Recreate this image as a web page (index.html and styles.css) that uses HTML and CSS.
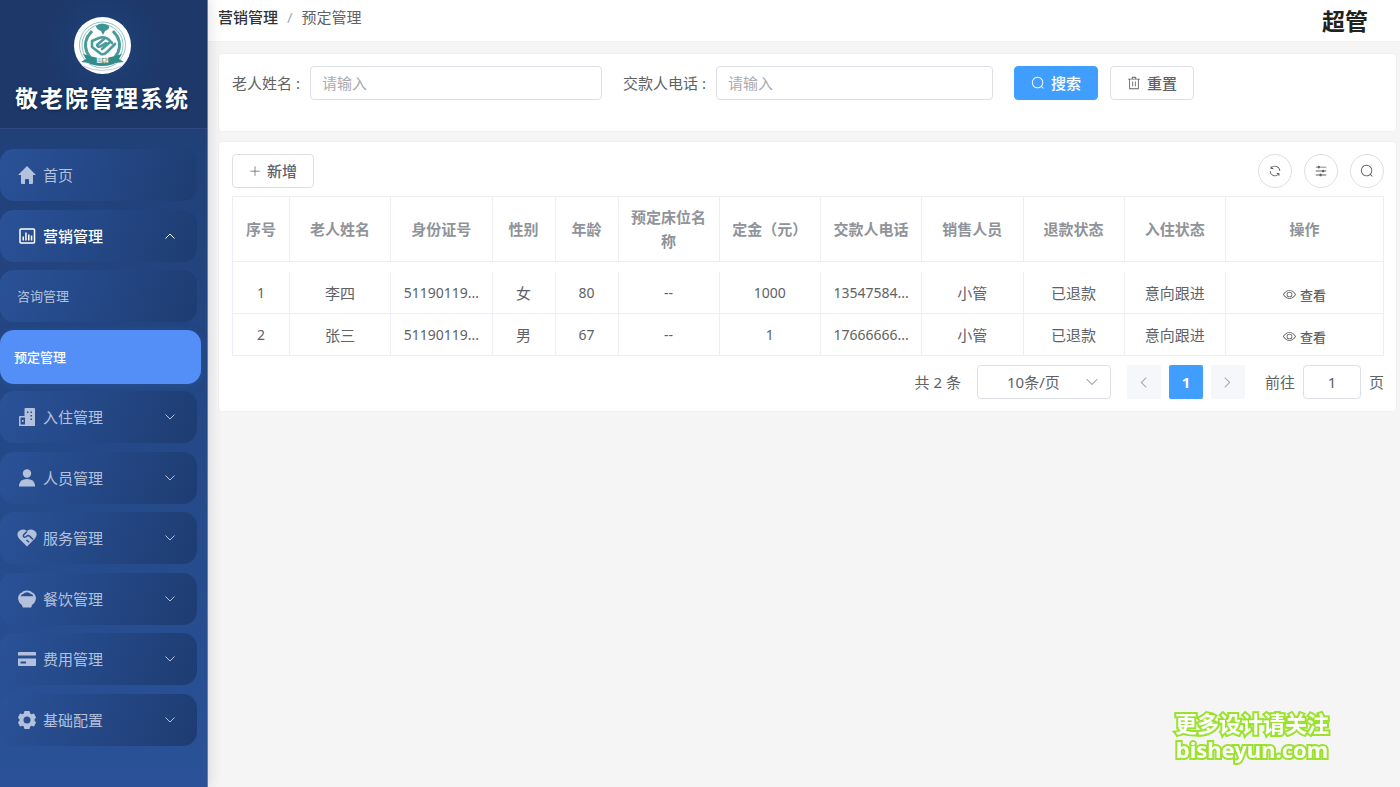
FILE: index.html
```html
<!DOCTYPE html>
<html lang="zh-CN">
<head>
<meta charset="utf-8">
<meta name="viewport" content="width=device-width, initial-scale=1">
<title>敬老院管理系统</title>
<link rel="stylesheet" href="styles.css">
</head>
<body>
<svg class="sprite" aria-hidden="true">
  <symbol id="search" viewBox="0 0 1024 1024"><path d="M795.904 750.72l124.992 124.928a32 32 0 0 1-45.248 45.248L750.656 795.904a416 416 0 1 1 45.248-45.248zM480 832a352 352 0 1 0 0-704 352 352 0 0 0 0 704z"/></symbol>
  <symbol id="view" viewBox="0 0 1024 1024"><path d="M512 160c320 0 512 352 512 352S832 864 512 864 0 512 0 512s192-352 512-352zm0 64c-225.28 0-384.128 208.064-436.8 288 52.608 79.872 211.456 288 436.8 288 225.28 0 384.128-208.064 436.8-288-52.608-79.872-211.456-288-436.8-288zm0 64a224 224 0 1 1 0 448 224 224 0 0 1 0-448zm0 64a160.192 160.192 0 0 0-160 160c0 88.192 71.744 160 160 160s160-71.808 160-160-71.744-160-160-160z"/></symbol>
  <symbol id="chevron" viewBox="0 0 12 12"><path d="M1.500 3.500 6 8l4.500-4.500" fill="none" stroke="currentColor" stroke-width="1"/></symbol>
</svg>
<div class="layout">
  <aside class="sidebar">
    <div class="brand">
      <svg class="logo" viewBox="0 0 57 57" aria-hidden="true">
        <circle cx="28.500" cy="28.500" r="28.500" fill="#fff"/>
        <g fill="none" stroke="#4a9c9c">
          <circle cx="28.500" cy="28" r="23" stroke-width="1" opacity=".6"/>
          <circle cx="28.500" cy="28" r="20.500" stroke-width="1" opacity=".6"/>
          <path d="M16 40a18 18 0 0 1-2-21l4-5M41 40a18 18 0 0 0 2-21l-4-5" stroke-width="3"/>
          <path d="M9 49q19 9 39 0" stroke="#c3cce0" stroke-width="1"/>
        </g>
        <path d="M22 9q6-5 13 0 1 3-4 5l-2 4-2-4q-5-2-5-5z" fill="#3d9494"/>
        <g fill="none" stroke="#4a9c9c" stroke-width="2.600" stroke-linecap="round" stroke-linejoin="round">
          <path d="M18 24l7-3q5-2 9 1l4 4M18 24v6l9 7q3 1 6-2l8-8"/>
          <path d="M30 22l-7 6q1 3 4 1l5-3M35 26l-7 6"/>
        </g>
        <path d="M7 45l5-3-3-5 7 2q12 4 25 0l7-2-3 5 5 3-9 1-1 1q-12 4-24 0l-1-1z" fill="#338c8a"/>
        <text class="logo-text" x="28.500" y="45" text-anchor="middle">颐和</text>
      </svg>
      <h1 class="brand-name">敬老院管理系统</h1>
    </div>
    <nav class="menu">
      <a class="item" href="#">
        <svg class="item-icon" viewBox="0 0 18 18"><path d="M9 0 0 9h3v8q0 1 1 1h3v-4q0-1 1-1h2q1 0 1 1v4h3q1 0 1-1V9h3z"/></svg>
        <span>首页</span></a>
      <a class="item item-open" href="#">
        <svg class="item-icon" viewBox="0 0 18 18"><rect x="2" y="2" width="14.500" height="14" rx="1" fill="none" stroke="currentColor" stroke-width="1.500"/><path d="M4.500 9.500H6v4H4.500zM7.200 5.500h1.500v8H7.200zM10 7.500h1.500v6H10zM12.800 8.500h1.500v5h-1.500z"/></svg>
        <span>营销管理</span><svg class="arrow arrow-up"><use href="#chevron"/></svg></a>
      <a class="item item-sub" href="#"><span>咨询管理</span></a>
      <a class="item item-sub item-active" href="#" aria-current="page"><span>预定管理</span></a>
      <a class="item" href="#">
        <svg class="item-icon" viewBox="0 0 18 18"><path fill-rule="evenodd" d="M6.500 7V1q0-1 1-1H16q1 0 1 1v17H1V9q0-1 1-1h4.500zM2.500 9.500v7h4.500v-7zM4 12h1.500v2H4zM9 3.500V5h1.500V3.500zm3.500 0V5H14V3.500zm0 3.500v1.500H14V7zm0 3.500V12H14v-1.500z"/></svg>
        <span>入住管理</span><svg class="arrow"><use href="#chevron"/></svg></a>
      <a class="item" href="#">
        <svg class="item-icon" viewBox="0 0 18 18"><circle cx="9" cy="4.500" r="4.200"/><path d="M1 17.500V16q1-6 8-6t8 6v1.500z"/></svg>
        <span>人员管理</span><svg class="arrow"><use href="#chevron"/></svg></a>
      <a class="item" href="#">
        <svg class="item-icon" viewBox="0 0 18 18"><path d="M9 17.500 1 9.500Q-2 5.500.5 2.500 4.500-1 9 2q4.500-3 8.500.5 2.500 3-.5 7z"/><path d="M9 2.500 5.700 5.800q-1 2.200 1 2.500 1.300 0 2.500-1.500 1.200-.8 2.300.3l3.500 3.400M8.500 11l2.500 2.300" fill="none" stroke="#274f94" stroke-width="1.500"/></svg>
        <span>服务管理</span><svg class="arrow"><use href="#chevron"/></svg></a>
      <a class="item" href="#">
        <svg class="item-icon" viewBox="0 0 18 18"><path fill-rule="evenodd" d="M0 8Q1 3 4 2.500 5 .5 9 .5t5 2Q17 3 18 8q-.5 5-4 7l-.8 2.500H4.800L4 15Q.5 13 0 8zM2.500 6.200h13q-1-2.500-3-2.500-1-1.500-3.500-1.500T5.500 3.700q-2 0-3 2.500z"/></svg>
        <span>餐饮管理</span><svg class="arrow"><use href="#chevron"/></svg></a>
      <a class="item" href="#">
        <svg class="item-icon" viewBox="0 0 18 18"><path fill-rule="evenodd" d="M1 2h16q1 0 1 1v2.500H0V3q0-1 1-1zM0 8.500h18V15q0 1-1 1H1q-1 0-1-1zM2.500 11.500v2h5.500v-2z"/></svg>
        <span>费用管理</span><svg class="arrow"><use href="#chevron"/></svg></a>
      <a class="item" href="#">
        <svg class="item-icon" viewBox="0 0 18 18"><path fill-rule="evenodd" d="M6.500 0h5l.7 2.600 1.300.7L16 2.600l2 4L16.200 9l1.800 2.400-2 4-2.500-.7-1.300.7-.7 2.600h-5l-.7-2.600-1.300-.7-2.500.7-2-4L1.800 9 0 6.600l2-4 2.500.7 1.300-.7zM9 5.500a3.500 3.500 0 1 0 0 7 3.500 3.500 0 0 0 0-7z"/></svg>
        <span>基础配置</span><svg class="arrow"><use href="#chevron"/></svg></a>
    </nav>
  </aside>

  <div class="page">
    <header class="topbar">
      <nav class="crumbs"><a class="crumb-link" href="#">营销管理</a><span class="crumb-sep">/</span><span>预定管理</span></nav>
      <strong class="user">超管</strong>
    </header>
    <main class="content">
      <form class="card filters">
        <div class="field"><label for="name">老人姓名 :</label><input class="input" id="name" type="text" placeholder="请输入"></div>
        <div class="field"><label for="phone">交款人电话 :</label><input class="input" id="phone" type="text" placeholder="请输入"></div>
        <div class="actions">
          <button class="btn btn-primary" type="button"><svg class="icon"><use href="#search"/></svg>搜索</button>
          <button class="btn" type="button"><svg class="icon" viewBox="0 0 1024 1024"><path d="M160 256H96a32 32 0 0 1 0-64h256V95.936a32 32 0 0 1 32-32h256a32 32 0 0 1 32 32V192h256a32 32 0 1 1 0 64h-64v672a32 32 0 0 1-32 32H192a32 32 0 0 1-32-32V256zm448-64v-64H416v64h192zM224 896h576V256H224v640zm192-128a32 32 0 0 1-32-32V416a32 32 0 0 1 64 0v320a32 32 0 0 1-32 32zm192 0a32 32 0 0 1-32-32V416a32 32 0 0 1 64 0v320a32 32 0 0 1-32 32z"/></svg>重置</button>
        </div>
      </form>

      <section class="card">
        <div class="toolbar">
          <button class="btn" type="button"><svg class="icon icon-plus" viewBox="0 0 1024 1024"><path d="M480 480V128a32 32 0 0 1 64 0v352h352a32 32 0 1 1 0 64H544v352a32 32 0 1 1-64 0V544H128a32 32 0 0 1 0-64h352z"/></svg>新增</button>
          <div class="tools">
            <button class="round" type="button" aria-label="刷新"><svg class="icon" viewBox="0 0 1024 1024"><path d="M771.776 794.88A384 384 0 0 1 128 512h64a320 320 0 0 0 555.712 216.448H654.72a32 32 0 1 1 0-64h149.056a32 32 0 0 1 32 32v148.928a32 32 0 1 1-64 0v-50.56zM276.288 295.616h92.992a32 32 0 0 1 0 64H220.16a32 32 0 0 1-32-32V178.56a32 32 0 0 1 64 0v50.56A384 384 0 0 1 896.128 512h-64a320 320 0 0 0-555.776-216.384z"/></svg></button>
            <button class="round" type="button" aria-label="列设置"><svg class="icon" viewBox="0 0 1024 1024"><path d="M389.44 768a96.064 96.064 0 0 1 181.12 0H896v64H570.56a96.064 96.064 0 0 1-181.12 0H128v-64h261.44zm192-288a96.064 96.064 0 0 1 181.12 0H896v64H762.56a96.064 96.064 0 0 1-181.12 0H128v-64h453.44zm-320-288a96.064 96.064 0 0 1 181.12 0H896v64H442.56a96.064 96.064 0 0 1-181.12 0H128v-64h133.44z"/></svg></button>
            <button class="round" type="button" aria-label="搜索"><svg class="icon"><use href="#search"/></svg></button>
          </div>
        </div>

        <table class="table">
          <colgroup><col class="col-index"><col><col><col class="col-short"><col class="col-short"><col><col><col><col><col><col><col class="col-ops"></colgroup>
          <thead><tr><th>序号</th><th>老人姓名</th><th>身份证号</th><th>性别</th><th>年龄</th><th>预定床位名称</th><th>定金（元）</th><th>交款人电话</th><th>销售人员</th><th>退款状态</th><th>入住状态</th><th>操作</th></tr></thead>
          <tbody>
            <tr><td class="num">1</td><td>李四</td><td class="num">51190119...</td><td>女</td><td class="num">80</td><td class="num">--</td><td class="num">1000</td><td class="num">13547584...</td><td>小管</td><td>已退款</td><td>意向跟进</td><td><button class="link" type="button"><svg class="icon-small"><use href="#view"/></svg>查看</button></td></tr>
            <tr><td class="num">2</td><td>张三</td><td class="num">51190119...</td><td>男</td><td class="num">67</td><td class="num">--</td><td class="num">1</td><td class="num">17666666...</td><td>小管</td><td>已退款</td><td>意向跟进</td><td><button class="link" type="button"><svg class="icon-small"><use href="#view"/></svg>查看</button></td></tr>
          </tbody>
        </table>

        <div class="pager">
          <span>共 2 条</span>
          <span class="size"><select class="size-select" aria-label="每页条数"><option>10条/页</option></select><svg class="size-arrow"><use href="#chevron"/></svg></span>
          <div class="pages">
            <button class="page-btn" type="button" aria-label="上一页" disabled><svg class="page-arrow arrow-left"><use href="#chevron"/></svg></button>
            <button class="page-btn page-current" type="button">1</button>
            <button class="page-btn" type="button" aria-label="下一页" disabled><svg class="page-arrow arrow-right"><use href="#chevron"/></svg></button>
          </div>
          <label class="jump">前往<input class="input jump-input" type="text" value="1">页</label>
        </div>
      </section>
    </main>
  </div>
</div>
<div class="watermark"><span>更多设计请关注</span><span>bisheyun.com</span></div>
</body>
</html>
```

FILE: styles.css
```css
* { box-sizing: border-box; }

body {
  margin: 0;
  font: 15px/22px "Noto Sans", "Noto Sans CJK SC", sans-serif;
  color: #606266;
  background: #f5f5f5;
}

a { color: inherit; text-decoration: none; }
button, input, select { font: inherit; color: inherit; margin: 0; }
svg { flex: none; fill: currentColor; }
.sprite { display: none; }

.layout { display: flex; min-height: 100vh; }

/* Sidebar */
.sidebar {
  position: relative;
  z-index: 1;
  display: flex;
  flex: none;
  flex-direction: column;
  width: 208px;
  color: #b4c1dc;
  background: linear-gradient(180deg, #1e3c72, #2a5298);
  border-right: 1px solid #5f7fb5;
  box-shadow: 2px 0 12px rgba(0, 0, 0, .12);
}

.brand {
  display: flex;
  flex-direction: column;
  align-items: center;
  gap: 8px;
  height: 129px;
  padding: 17px 2px 0 0;
  background: radial-gradient(circle at 50% 36%, #1f4279, #1d3869 60px);
  border-bottom: 1px solid #2c4a81;
}

.logo { width: 57px; height: 57px; }
.logo-text { font-size: 6px; font-weight: 700; fill: #fff; }

.brand-name {
  margin: 0;
  font-size: 23px;
  line-height: 32px;
  letter-spacing: 2px;
  white-space: nowrap;
  color: #fff;
  text-shadow: 0 1px 3px rgba(0, 0, 0, .4);
}

.menu {
  display: flex;
  flex: 1;
  flex-direction: column;
  justify-content: space-between;
  padding: 20px 10px 41px 0;
}

.item {
  display: flex;
  align-items: center;
  gap: 7px;
  height: 52px;
  padding: 0 21px 0 18px;
  border-radius: 14px;
  background: linear-gradient(110deg, #2a5298, #1e3c72);
}

.item-open { color: #fff; font-weight: 500; }
.item-sub { padding-left: 17px; font-size: 13px; }

.item-active {
  height: 54px;
  margin: -1px -4px -1px 0;
  padding-left: 14px;
  color: #fff;
  font-weight: 500;
  background: #548ef7;
  box-shadow: 0 2px 10px rgba(40, 110, 180, .3);
}

.item-icon { width: 18px; height: 18px; overflow: visible; }
.arrow { width: 12px; height: 12px; margin-left: auto; }
.arrow-up { transform: rotate(180deg); }

/* Top bar */
.page { flex: 1; min-width: 0; }

.topbar {
  display: flex;
  align-items: center;
  justify-content: space-between;
  height: 42px;
  padding: 0 32px 0 10px;
  background: #fff;
  border-bottom: 1px solid #f0f0f0;
}

.crumbs { display: flex; gap: 9px; padding-bottom: 8px; }
.crumb-link { color: #303133; font-weight: 500; }
.crumb-sep { color: #a8abb2; }
.user { font-size: 23px; color: #222; }

/* Cards */
.content {
  display: flex;
  flex-direction: column;
  gap: 9px;
  padding: 11px 3px 11px 10px;
}

.card {
  padding: 12px 12px 12px 13px;
  background: #fff;
  border: 1px solid #f0f0f0;
  border-radius: 4px;
}

.filters {
  display: grid;
  grid-template-columns: repeat(3, 1fr);
  gap: 21px;
  padding-bottom: 31px;
}

.field { display: flex; align-items: center; gap: 10px; }
.actions, .tools { display: flex; align-items: center; gap: 12px; }
.field label { white-space: nowrap; }

.input {
  flex: 1;
  min-width: 0;
  height: 34px;
  padding: 0 11px 1px;
  background: #fff;
  border: 1px solid #dcdfe6;
  border-radius: 4px;
}

.input::placeholder { color: #a8abb2; opacity: 1; }

.btn {
  display: flex;
  align-items: center;
  gap: 6px;
  height: 34px;
  padding: 0 16px;
  font-weight: 500;
  background: #fff;
  border: 1px solid #dcdfe6;
  border-radius: 4px;
}

.btn-primary { color: #fff; background: #409eff; border-color: #409eff; }
.icon { width: 14px; height: 14px; }
.icon-plus { width: 12px; height: 12px; }
.icon-small { width: 13px; height: 13px; }

.toolbar { display: flex; justify-content: space-between; margin-bottom: 8px; }

.round {
  display: grid;
  place-items: center;
  width: 34px;
  height: 34px;
  padding: 0;
  background: #fff;
  border: 1px solid #dcdfe6;
  border-radius: 50%;
}

/* Table */
.table {
  width: 100%;
  table-layout: fixed;
  border: solid #ebeef5;
  border-width: 1px 1px 0;
  border-spacing: 0;
}

.col-index { width: 57px; }
.col-short { width: 63px; }
.col-ops { width: 157px; }

th, td {
  padding: 8px 12px;
  text-align: center;
  border: solid #ebeef5;
  border-width: 0 1px 1px 0;
}

th { height: 65px; line-height: 24px; color: #909399; font-weight: 700; }
td { height: 42px; }
th:last-child, td:last-child { border-right: 0; }
tbody::before { content: ""; display: block; height: 10px; }
.num { font-size: 14px; white-space: nowrap; }

.link {
  display: flex;
  align-items: center;
  gap: 4px;
  margin: 4px auto 0;
  padding: 0;
  font-size: 13px;
  line-height: 20px;
  font-weight: 500;
  background: none;
  border: 0;
}

/* Pagination */
.pager {
  display: flex;
  align-items: center;
  justify-content: flex-end;
  gap: 16px;
  margin-top: 9px;
}

.size { position: relative; }

.size-select {
  display: block;
  width: 134px;
  height: 34px;
  padding: 0 29px 1px;
  appearance: none;
  background: #fff;
  border: 1px solid #dcdfe6;
  border-radius: 4px;
}

.size-arrow {
  position: absolute;
  top: 10px;
  right: 12px;
  width: 14px;
  height: 14px;
  color: #a8abb2;
  pointer-events: none;
}

.pages { display: flex; gap: 8px; }

.page-btn {
  display: grid;
  place-items: center;
  width: 34px;
  height: 34px;
  padding: 0;
  color: #a8abb2;
  background: #f5f7fa;
  border: 0;
  border-radius: 2px;
}

.page-current { color: #fff; font-weight: 700; background: #409eff; }
.page-arrow { width: 13px; height: 13px; }
.arrow-left { transform: rotate(90deg); }
.arrow-right { transform: rotate(-90deg); }
.jump { display: flex; align-items: center; gap: 8px; margin-left: 4px; }
.jump-input { flex: none; width: 58px; text-align: center; }

.watermark {
  position: fixed;
  right: 71px;
  bottom: 25px;
  z-index: 2;
  display: grid;
  justify-items: center;
  font-size: 22px;
  line-height: 26px;
  font-weight: 700;
  color: #fff;
  -webkit-text-stroke: 4px #9be22d;
  paint-order: stroke fill;
}
```
